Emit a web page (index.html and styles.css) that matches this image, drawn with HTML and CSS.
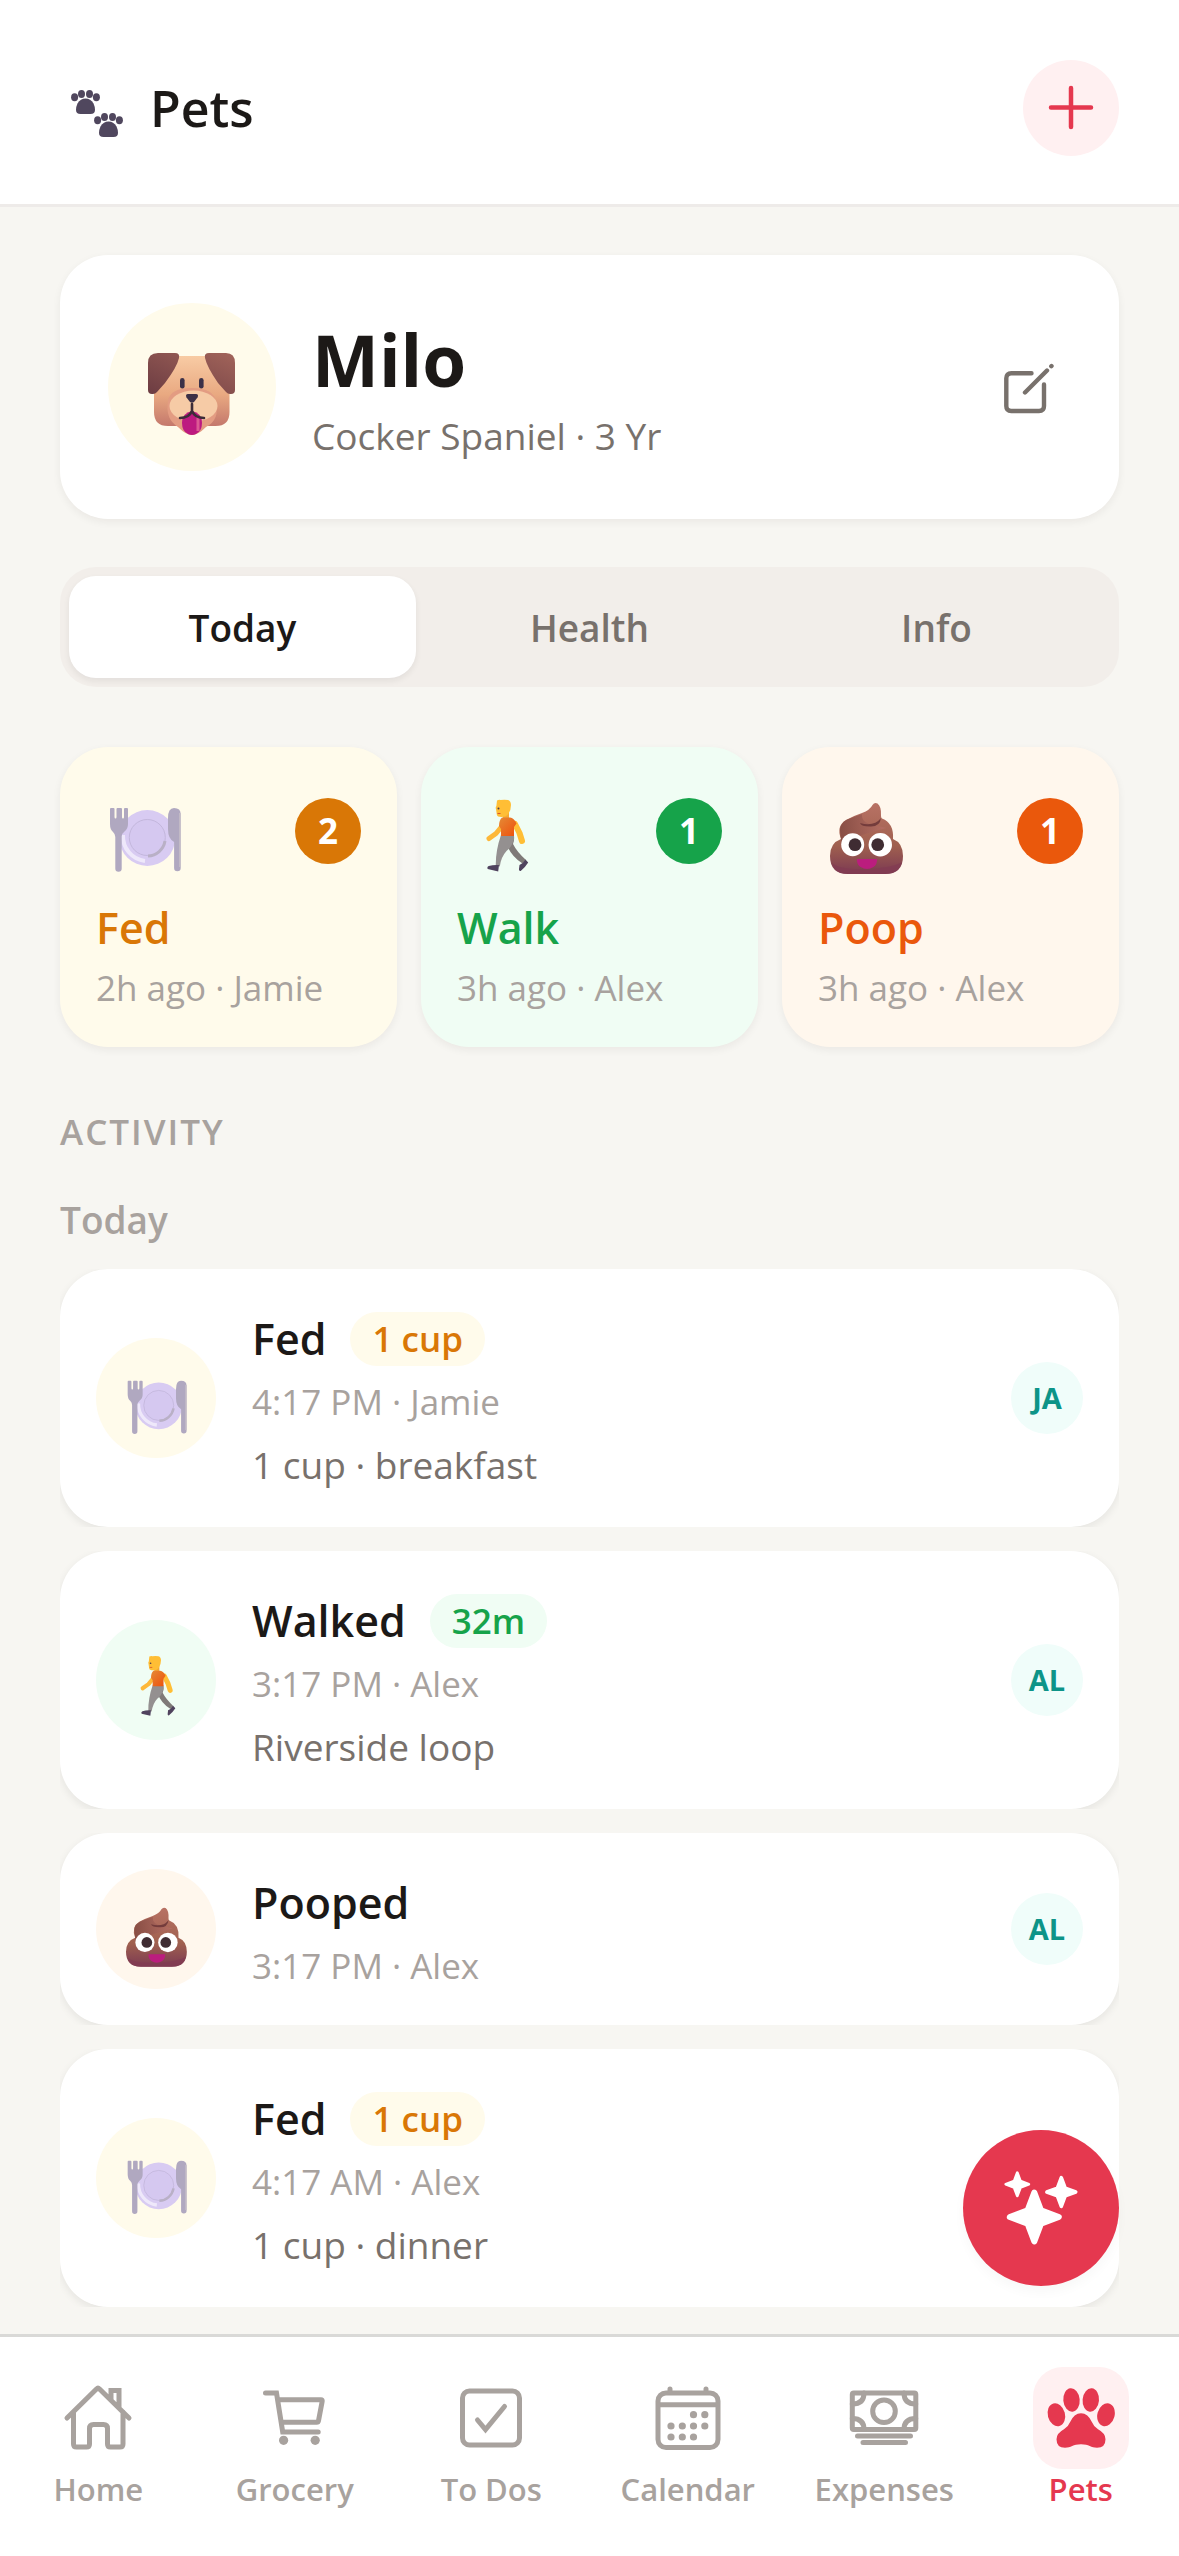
FILE: index.html
```
<!DOCTYPE html>
<html lang="en">
<head>
  <meta charset="UTF-8">
  <meta name="viewport" content="width=device-width, initial-scale=1">
  <title>Pets</title>
  <link rel="stylesheet" href="styles.css">
</head>
<body>

  <!-- Shared drawings -->
  <svg class="sprite" aria-hidden="true">
    <defs>
      <linearGradient id="poopFill" x1="0" y1="0" x2="0" y2="1">
        <stop offset="0" stop-color="#b87264"/>
        <stop offset="0.6" stop-color="#a0604f"/>
        <stop offset="1" stop-color="#7c3a52"/>
      </linearGradient>
      <linearGradient id="poopTop" x1="0" y1="0" x2="1" y2="0">
        <stop offset="0" stop-color="#804840"/>
        <stop offset="1" stop-color="#b87066"/>
      </linearGradient>
      <linearGradient id="dogHead" x1="0" y1="0" x2="0" y2="1">
        <stop offset="0" stop-color="#f8cba4"/>
        <stop offset="0.55" stop-color="#e9a981"/>
        <stop offset="1" stop-color="#c4786c"/>
      </linearGradient>
      <linearGradient id="dogEar" x1="1" y1="0" x2="0" y2="1">
        <stop offset="0" stop-color="#a2645a"/>
        <stop offset="1" stop-color="#6c3c42"/>
      </linearGradient>
      <linearGradient id="shirt" x1="0" y1="0" x2="1" y2="1">
        <stop offset="0" stop-color="#e58a35"/>
        <stop offset="1" stop-color="#ee4f0c"/>
      </linearGradient>
    </defs>

    <symbol id="plate" viewBox="0 0 96 96">
      <circle cx="51.3" cy="55" r="28" fill="#d8cbf2"/>
      <path d="M27 52a25 25 0 0 0 22 26" fill="none" stroke="#eee8fa" stroke-width="4"/>
      <circle cx="51.3" cy="54.5" r="18" fill="#d5c8f0" stroke="#c3b7dc" stroke-width="1"/>
      <path d="M69 58a18 18 0 0 1-17 15" fill="none" stroke="#b9b0c6" stroke-width="3"/>
      <path d="M15 25h2.500q1 0 1 1v8q0 1.500 1 1.500t1-1.500v-8q0-1 1-1h3.500q1 0 1 1v8q0 1.500 1 1.500t1-1.500v-8q0-1 1-1h2q1 0 1 1v15q0 5-3.500 7.500-2.800 2-2.800 5v32a3.200 3.200 0 0 1-6.400 0V54q0-3-2.300-5Q14 46.500 14 41V26q0-1 1-1z" fill="#b0a8c0"/>
      <path d="M78 25q6.700 0 6.700 6v54a3.300 3.300 0 0 1-6.600 0V59Q72 56 72 46V35q0-10 6-10z" fill="#b0a8c0"/>
      <path d="M84 30v54" stroke="#c8c0c8" stroke-width="1.500"/>
    </symbol>

    <symbol id="walker" viewBox="0 0 96 96">
      <path d="M58 41l4.500 9 2.500 8" fill="none" stroke="#ffbe35" stroke-width="6" stroke-linecap="round" stroke-linejoin="round"/>
      <path d="M43.500 45L39 50.500l-7 5" fill="none" stroke="#fdb839" stroke-width="5" stroke-linecap="round" stroke-linejoin="round"/>
      <path d="M46 28h6v8h-6z" fill="#f5a832"/>
      <path d="M40 17.500q2-1 3.500-.500 4-.500 7.500 0 3 1 3 5 0 5-2.500 8.500-2 3.500-7 3.500-4.500 0-4.700-2.500l-.800-5.500q-.800-1 .400-3z" fill="#ffbe35"/>
      <circle cx="41.500" cy="25.500" r="1" fill="#4a3b4c"/>
      <path d="M40.500 30.500h3" stroke="#d9582c" stroke-width="1"/>
      <path d="M50 55L57 53q.500 4-1 8 4 8 13 16l-3.500 3.500Q54 73 50 62z" fill="#7f7a78"/>
      <path d="M44 52h13v4q-2 8-7.500 12Q44 74 42.800 83.500l-4-1Q38.500 68 44 52z" fill="#949090"/>
      <path d="M45 34.500h8q4 .500 6.500 6L57 44v9H44v-7l-2-3q0-6 3-8.500z" fill="url(#shirt)"/>
      <path d="M42 82l-.800 6.500-10.500-2.500q-1-2 1-3 5-1.500 10.300-1zM68.500 76.500l2.700 3q-3.500 5.500-7.500 8.500-2 .500-1.700-2l.500-4q3.500-1.500 6-5.500z" fill="#50435e"/>
    </symbol>

    <symbol id="poop" viewBox="0 0 96 96">
      <path d="M23 56Q18 43 28 37q7-4 16-7 8-3 10.500-8 2-3 5-1.500 4 3 3.500 12-.200 2 1 3Q76 40 75 56q10 4 10 17 0 18-18 18H30Q12 91 12 73q0-13 11-17z" fill="url(#poopFill)"/>
      <path d="M22.500 52Q20 41 29 36.500L44 31q-1 9 12 11l12 3q-24 6-44.500 15z" fill="url(#poopTop)" opacity=".8"/>
      <path d="M42 40q14 4 21-5-1 9-11 8.500-9 0-10-3.500z" fill="#743c3c"/>
      <path d="M14 80q8 7 34 6t36-7q-3 12-17 12H30q-13 0-16-11z" fill="#823a52" opacity=".7"/>
      <circle cx="34.700" cy="61.700" r="11.500" fill="#fff"/>
      <circle cx="62.300" cy="61.700" r="11.700" fill="#fff"/>
      <circle cx="37" cy="61.700" r="6.400" fill="#3f2c32"/>
      <circle cx="59.700" cy="61.700" r="6.400" fill="#3f2c32"/>
      <path d="M39 76h20q.500 5-3.500 8-6.500 4-13 0-4-3-3.500-8z" fill="#bb1d7e"/>
    </symbol>

    <symbol id="dog" viewBox="0 0 96 96">
      <path d="M14 17h68q3.500 0 3.500 4v52q0 14-14 14H24Q10 87 10 73V21q0-4 4-4z" fill="url(#dogHead)"/>
      <path d="M24 62q2-13 24-13t24 14q4 18-10 25-8 8-14 8t-14-8Q21 80 24 62z" fill="#e39c82"/>
      <ellipse cx="49.500" cy="67" rx="24" ry="15.500" fill="#f6cba6"/>
      <path d="M14 14h17q5 0 4 5-2 9-14 25l-8 9q-2 2.500-5 2-4 0-4-4V24q0-10 10-10zM82 14H65q-5 0-4 5 2 9 13 25l8 9q2 2.500 5 2 4 0 4-4V24q0-10-9-10z" fill="url(#dogEar)"/>
      <rect x="36" y="39" width="4.600" height="10.500" rx="2.300" fill="#3c3148"/>
      <rect x="55" y="39" width="4.600" height="10.500" rx="2.300" fill="#3c3148"/>
      <path d="M48 72q10 2 10 12 0 8-6 11-4 2-8 0-6-3-6-11 0-10 10-12z" fill="#bd1a80"/>
      <path d="M54 78v14" stroke="#dc5a94" stroke-width="3"/>
      <path d="M44 55h8q3 0 1.500 3.500L50 63q-2 1.500-4 0l-3.500-4.500Q41 55 44 55z" fill="#3c3046"/>
      <path d="M48 65v7q-3 7-12 7M48 72q3 7 12 7" fill="none" stroke="#3c2c38" stroke-width="2.600" stroke-linecap="round"/>
    </symbol>

    <symbol id="paws" viewBox="0 0 72 72">
      <g id="print" fill="#50475e">
        <ellipse cx="14.600" cy="25.300" rx="3.500" ry="4"/>
        <ellipse cx="21.500" cy="22" rx="3.500" ry="4"/>
        <ellipse cx="29.500" cy="22" rx="3.500" ry="4"/>
        <ellipse cx="36.400" cy="25.300" rx="3.500" ry="4"/>
        <path d="M25.500 26.500q5 0 8 5 1.500 3 1.500 6.500 0 4-4.500 4h-10q-4.500 0-4.500-4 0-3.500 1.500-6.500 3-5 8-5z"/>
      </g>
      <use href="#print" x="23" y="23"/>
    </symbol>
  </svg>

  <!-- Header -->
  <header class="header">
    <svg class="header-icon" aria-hidden="true"><use href="#paws"/></svg>
    <h1>Pets</h1>
    <button class="add-btn" type="button" aria-label="Add pet">
      <svg viewBox="0 0 48 48"><path d="M24 4v39M4 23.500h40"/></svg>
    </button>
  </header>

  <main>
    <!-- Pet -->
    <section class="pet-card">
      <div class="pet-photo"><svg aria-hidden="true"><use href="#dog"/></svg></div>
      <div class="pet-text">
        <h2>Milo</h2>
        <p>Cocker Spaniel · 3 Yr</p>
      </div>
      <button class="edit-btn" type="button" aria-label="Edit pet">
        <svg viewBox="0 0 60 60"><path d="M32.500 16.300H12.300q-5 0-5 5V49q0 5 5 5H40q5 0 5-5V27.500M26 35.500L48 13.500M52.300 9.200l.2-.2"/></svg>
      </button>
    </section>

    <!-- Tabs -->
    <div class="tabs" role="tablist">
      <button class="tab active" type="button" role="tab" aria-selected="true">Today</button>
      <button class="tab" type="button" role="tab" aria-selected="false">Health</button>
      <button class="tab" type="button" role="tab" aria-selected="false">Info</button>
    </div>

    <!-- Quick log -->
    <div class="stats">
      <button class="stat fed" type="button">
        <span class="stat-top"><svg aria-hidden="true"><use href="#plate"/></svg><span class="count">2</span></span>
        <span class="stat-name">Fed</span>
        <span class="stat-meta">2h ago · Jamie</span>
      </button>
      <button class="stat walk" type="button">
        <span class="stat-top"><svg aria-hidden="true"><use href="#walker"/></svg><span class="count">1</span></span>
        <span class="stat-name">Walk</span>
        <span class="stat-meta">3h ago · Alex</span>
      </button>
      <button class="stat poo" type="button">
        <span class="stat-top"><svg aria-hidden="true"><use href="#poop"/></svg><span class="count">1</span></span>
        <span class="stat-name">Poop</span>
        <span class="stat-meta">3h ago · Alex</span>
      </button>
    </div>

    <!-- Activity -->
    <h3 class="section-title">ACTIVITY</h3>
    <h4 class="day">Today</h4>
    <ul class="activity">
      <li>
        <div class="entry fed">
          <div class="entry-icon"><svg aria-hidden="true"><use href="#plate"/></svg></div>
          <div class="entry-text">
            <div class="entry-title">Fed <span class="chip">1 cup</span></div>
            <p class="time">4:17 PM · Jamie</p>
            <p class="note">1 cup · breakfast</p>
          </div>
          <span class="avatar">JA</span>
        </div>
      </li>
      <li>
        <div class="entry walk">
          <div class="entry-icon"><svg aria-hidden="true"><use href="#walker"/></svg></div>
          <div class="entry-text">
            <div class="entry-title">Walked <span class="chip">32m</span></div>
            <p class="time">3:17 PM · Alex</p>
            <p class="note">Riverside loop</p>
          </div>
          <span class="avatar">AL</span>
        </div>
      </li>
      <li>
        <div class="entry poo">
          <div class="entry-icon"><svg aria-hidden="true"><use href="#poop"/></svg></div>
          <div class="entry-text">
            <div class="entry-title">Pooped</div>
            <p class="time">3:17 PM · Alex</p>
          </div>
          <span class="avatar">AL</span>
        </div>
      </li>
      <li>
        <div class="entry fed">
          <div class="entry-icon"><svg aria-hidden="true"><use href="#plate"/></svg></div>
          <div class="entry-text">
            <div class="entry-title">Fed <span class="chip">1 cup</span></div>
            <p class="time">4:17 AM · Alex</p>
            <p class="note">1 cup · dinner</p>
          </div>
        </div>
      </li>
    </ul>
  </main>

  <button class="fab" type="button" aria-label="Assistant">
    <svg viewBox="0 0 84 84">
      <defs><path id="star" d="M0-24.500L6.700-6.700 24.500 0 6.700 6.700 0 24.500-6.700 6.700-24.500 0-6.700-6.700z"/></defs>
      <use href="#star" transform="translate(35.300 51)"/>
      <use href="#star" transform="translate(18.300 18.300) scale(.47)"/>
      <use href="#star" transform="translate(62.300 26) scale(.590)"/>
    </svg>
  </button>

  <!-- Bottom bar -->
  <nav class="nav">
    <a href="#">
      <span class="nav-icon"><svg viewBox="0 0 72 72"><path d="M5 36L34.500 7q1.500-1.500 3 0L67 36M11.500 30v32q0 3 3 3h10q3 0 3-3V46.500q0-4 4-4h10q4 0 4 4V62q0 3 3 3H58q3 0 3-3V30M49 17V8.500h8V25"/></svg></span>
      Home
    </a>
    <a href="#">
      <span class="nav-icon"><svg viewBox="0 0 72 72"><path d="M6.500 11h11l6.200 39h35.500M18.700 17.700H62q1.500 0 1.200 1.500l-3.700 19.600q-.300 1.500-1.800 1.500H22.500"/><circle class="dot" cx="24.600" cy="58.300" r="4.600"/><circle class="dot" cx="56.200" cy="58.300" r="4.600"/></svg></span>
      Grocery
    </a>
    <a href="#">
      <span class="nav-icon"><svg viewBox="0 0 72 72"><rect x="7.500" y="9" width="57" height="54" rx="7"/><path d="M22.500 38l8 9.500 19-23"/></svg></span>
      To Dos
    </a>
    <a href="#">
      <span class="nav-icon"><svg viewBox="0 0 72 72"><rect x="6" y="11" width="60" height="54.500" rx="8"/><path d="M7 22.700h58.500M18 7v3M54 7v3"/><g class="dot"><circle cx="41.500" cy="32.700" r="3.600"/><circle cx="52.800" cy="32.700" r="3.600"/><circle cx="19" cy="44" r="3.600"/><circle cx="30.300" cy="44" r="3.600"/><circle cx="41.500" cy="44" r="3.600"/><circle cx="52.800" cy="44" r="3.600"/><circle cx="19" cy="55" r="3.600"/><circle cx="30.300" cy="55" r="3.600"/><circle cx="41.500" cy="55" r="3.600"/></g></svg></span>
      Calendar
    </a>
    <a href="#">
      <span class="nav-icon"><svg viewBox="0 0 72 72"><rect x="4.300" y="11" width="63.500" height="36.500" rx="1.500"/><circle cx="36" cy="29.300" r="11.300"/><path d="M16 11q0 11-11.700 11M56 11q0 11 11.700 11M16 47.500q0-11-11.700-11M56 47.500q0-11 11.700-11M9.500 54h53M15 60.500h42.500"/></svg></span>
      Expenses
    </a>
    <a class="current" href="#" aria-current="page">
      <span class="nav-icon"><svg viewBox="0 0 72 72"><g class="dot"><ellipse cx="11.400" cy="32.700" rx="8.600" ry="11.700" transform="rotate(-15 11.400 32.700)"/><ellipse cx="26.500" cy="18" rx="8.200" ry="11.700" transform="rotate(-5 26.500 18)"/><ellipse cx="45.800" cy="18" rx="8.200" ry="11.700" transform="rotate(5 45.800 18)"/><ellipse cx="61" cy="32.700" rx="8.600" ry="11.700" transform="rotate(15 61 32.700)"/><path d="M36 31.300q-7 0-11 9-1.500 4-6 7-7.500 4-7.500 10 0 8.500 8.500 8.500c6 0 8-3.500 16-3.500s10 3.500 16 3.500q8.500 0 8.500-8.500 0-6-7.500-10-4.500-3-6-7-4-9-11-9z"/></g></svg></span>
      Pets
    </a>
  </nav>

</body>
</html>
```
FILE: styles.css
```
* { box-sizing: border-box; }
body {
  margin: 0;
  background: #f7f6f2;
  color: #1c1917;
  font-family: "Segoe UI", "Open Sans", "Noto Sans", sans-serif;
  font-size: 37px;
}
h1, h2, h3, h4, p, ul { margin: 0; padding: 0; }
ul { list-style: none; }
button {
  border: none;
  padding: 0;
  font-family: inherit;
  cursor: pointer;
}
svg { display: block; }
.sprite { position: absolute; width: 0; height: 0; }

/* Header */
.header {
  display: flex;
  align-items: center;
  gap: 18px;
  padding: 60px 60px 48px;
  background: #fff;
  border-bottom: 3px solid #eeebe9;
}
.header-icon { width: 72px; height: 72px; }
h1 {
  font-size: 50px;
  line-height: 72px;
  font-weight: 600;
}
.add-btn {
  width: 96px;
  height: 96px;
  margin-left: auto;
  border-radius: 50%;
  background: #fff0f1;
}
.add-btn svg {
  width: 48px;
  height: 48px;
  margin: auto;
  stroke: #e5384f;
  stroke-width: 4.5;
  stroke-linecap: round;
}

main { padding: 48px 60px 249px; }

/* Pet */
.pet-card {
  display: flex;
  align-items: center;
  gap: 36px;
  padding: 48px;
  border-radius: 48px;
  background: #fff;
  box-shadow: 0 3px 9px rgba(28, 25, 23, 0.06);
}
.pet-photo {
  display: flex;
  align-items: center;
  justify-content: center;
  width: 168px;
  height: 168px;
  border-radius: 50%;
  background: #fffbeb;
}
.pet-photo svg { width: 96px; height: 96px; }
.pet-text { flex: 1; }
.pet-text h2 {
  font-size: 71px;
  line-height: 98px;
  font-weight: 700;
}
.pet-text p {
  font-size: 37px;
  line-height: 54px;
  color: #78716c;
}
.edit-btn {
  width: 84px;
  height: 84px;
  background: none;
}
.edit-btn svg {
  width: 60px;
  height: 60px;
  margin: auto;
  fill: none;
  stroke: #78716c;
  stroke-width: 4.4;
  stroke-linecap: round;
}

/* Tabs */
.tabs {
  display: flex;
  margin-top: 48px;
  padding: 9px;
  border-radius: 36px;
  background: #f2eeea;
}
.tab {
  flex: 1;
  height: 102px;
  border-radius: 27px;
  background: none;
  color: #78716c;
  font-size: 37px;
  font-weight: 600;
}
.tab.active {
  background: #fff;
  color: #1c1917;
  box-shadow: 0 3px 6px rgba(28, 25, 23, 0.07);
}

/* Colours for each kind of entry */
.fed { --tint: #fffbeb; --ink: #d97706; }
.walk { --tint: #f0fdf4; --ink: #16a34a; }
.poo { --tint: #fff7ed; --ink: #ea580c; }

/* Quick log */
.stats {
  display: flex;
  gap: 24px;
  margin-top: 60px;
}
.stat {
  flex: 1;
  display: flex;
  flex-direction: column;
  padding: 36px;
  border-radius: 48px;
  background: var(--tint);
  text-align: left;
  box-shadow: 0 3px 9px rgba(28, 25, 23, 0.06);
}
.stat-top {
  display: flex;
  align-items: center;
  justify-content: space-between;
  margin-bottom: 18px;
}
.stat-top svg { width: 96px; height: 96px; }
.count {
  width: 66px;
  border-radius: 50%;
  background: var(--ink);
  color: #fff;
  font-size: 35px;
  line-height: 66px;
  font-weight: 700;
  text-align: center;
}
.stat-name {
  font-size: 43px;
  line-height: 62px;
  font-weight: 600;
  color: var(--ink);
}
.stat-meta {
  margin-top: 6px;
  font-size: 35px;
  line-height: 46px;
  color: #a8a29e;
}

/* Activity */
.section-title {
  margin-top: 58px;
  font-size: 35px;
  line-height: 54px;
  font-weight: 600;
  letter-spacing: 2px;
  color: #a8a29e;
}
.day {
  margin: 34px 0 22px;
  font-size: 37px;
  line-height: 54px;
  font-weight: 600;
  color: #a8a29e;
}
.activity {
  display: flex;
  flex-direction: column;
  gap: 24px;
}
.activity li { overflow: hidden; }
.entry {
  display: flex;
  align-items: center;
  gap: 36px;
  padding: 36px;
  border-radius: 48px;
  background: #fff;
  box-shadow: 0 3px 9px rgba(28, 25, 23, 0.08);
}
.entry-icon {
  display: flex;
  align-items: center;
  justify-content: center;
  width: 120px;
  height: 120px;
  padding-top: 4px;
  border-radius: 50%;
  background: var(--tint);
}
.entry-icon svg { width: 80px; height: 80px; }
.entry-text { flex: 1; }
.entry-title {
  display: flex;
  align-items: center;
  gap: 24px;
  font-size: 43px;
  line-height: 68px;
  font-weight: 600;
}
.chip {
  padding: 0 22px;
  border-radius: 27px;
  background: var(--tint);
  color: var(--ink);
  font-size: 35px;
  line-height: 54px;
}
.time {
  margin-top: 6px;
  font-size: 35px;
  line-height: 46px;
  color: #a8a29e;
}
.note {
  margin-top: 14px;
  font-size: 37px;
  line-height: 52px;
  color: #78716c;
}
.avatar {
  width: 72px;
  border-radius: 50%;
  background: #f0fdfa;
  color: #0d9488;
  font-size: 29px;
  line-height: 72px;
  font-weight: 700;
  text-align: center;
}

/* Floating button */
.fab {
  position: fixed;
  right: 60px;
  bottom: 270px;
  width: 156px;
  height: 156px;
  border-radius: 50%;
  background: #e5384f;
  box-shadow: 0 6px 12px rgba(28, 25, 23, 0.03);
}
.fab svg {
  width: 84px;
  height: 84px;
  margin: auto;
  fill: #fff;
  stroke: #fff;
  stroke-width: 6;
  stroke-linejoin: round;
}

/* Bottom bar */
.nav {
  position: fixed;
  left: 0;
  right: 0;
  bottom: 0;
  display: flex;
  padding: 30px 0 47px;
  background: #fff;
  border-top: 3px solid #d9d9d7;
}
.nav a {
  flex: 1;
  display: flex;
  flex-direction: column;
  align-items: center;
  color: #a8a29e;
  font-size: 31px;
  line-height: 40px;
  font-weight: 600;
  text-decoration: none;
}
.nav-icon {
  padding: 15px 12px;
  border-radius: 30px;
}
.nav svg {
  width: 72px;
  height: 72px;
  fill: none;
  stroke: currentColor;
  stroke-width: 5;
  stroke-linecap: round;
}
.nav .dot { fill: currentColor; stroke: none; }
.nav .current { color: #e5384f; }
.nav .current .nav-icon { background: #fff0f1; }
```
